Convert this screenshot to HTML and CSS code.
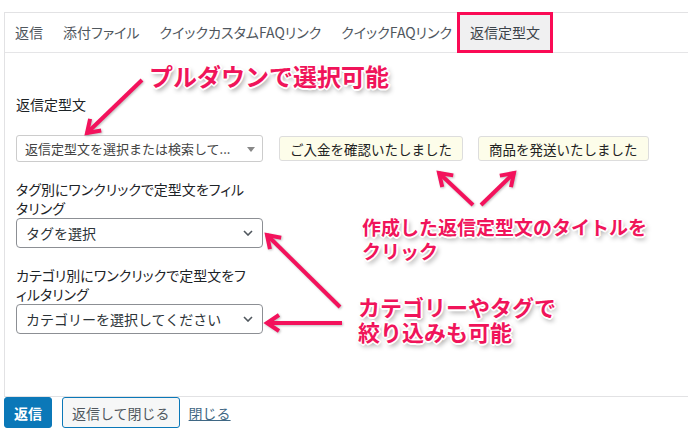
FILE: index.html
```html
<!DOCTYPE html>
<html lang="ja">
<head>
    <meta charset="UTF-8">
    <meta name="viewport" content="width=device-width, initial-scale=1.0">
    <title>返信定型文</title>
    <link rel="stylesheet" href="styles.css">
</head>
<body>
    <div class="page">
        <div class="panel">
            <ul class="tabs">
                <li>返信</li>
                <li>添付ファイル</li>
                <li>クイックカスタムFAQリンク</li>
                <li>クイックFAQリンク</li>
                <li class="active">返信定型文</li>
            </ul>
            <div class="content">
                <p class="label">返信定型文</p>
                <div class="row">
                    <div class="combo">返信定型文を選択または検索して...<span class="tri"></span></div>
                    <button class="snippet">ご入金を確認いたしました</button>
                    <button class="snippet">商品を発送いたしました</button>
                </div>
                <p class="label two">タグ別にワンクリックで定型文をフィル<br>タリング</p>
                <div class="select">タグを選択
                    <svg width="10" height="6" viewBox="0 0 10 6"><path d="M1 1l4 4 4-4" fill="none" stroke="#50575e" stroke-width="1.6"/></svg>
                </div>
                <p class="label two">カテゴリ別にワンクリックで定型文をフ<br>ィルタリング</p>
                <div class="select">カテゴリーを選択してください
                    <svg width="10" height="6" viewBox="0 0 10 6"><path d="M1 1l4 4 4-4" fill="none" stroke="#50575e" stroke-width="1.6"/></svg>
                </div>
            </div>
        </div>
        <div class="actions">
            <button class="btn primary">返信</button>
            <button class="btn secondary">返信して閉じる</button>
            <a href="#" class="close">閉じる</a>
        </div>

        <!-- annotations -->
        <div class="note note-pulldown">プルダウンで選択可能</div>
        <div class="note note-title">作成した返信定型文のタイトルを<br>クリック</div>
        <div class="note note-filter">カテゴリーやタグで<br>絞り込みも可能</div>
        <svg class="arrows" width="688" height="435" viewBox="0 0 688 435">
            <defs>
                <marker id="head" markerUnits="userSpaceOnUse" viewBox="-16 -11 20 22" markerWidth="20" markerHeight="22" refX="0" refY="0" orient="auto">
                    <path d="M-12 -8L0 0L-12 8" fill="none" stroke="#f3125c" stroke-width="4" stroke-linejoin="miter"/>
                </marker>
            </defs>
            <g stroke="#f3125c" stroke-width="4" marker-end="url(#head)">
                <line x1="142" y1="80" x2="87" y2="133"/>
                <line x1="473" y1="205" x2="439" y2="173"/>
                <line x1="481" y1="205" x2="514" y2="173"/>
                <line x1="340" y1="307" x2="267" y2="235"/>
                <line x1="342" y1="323" x2="267" y2="323"/>
            </g>
        </svg>
    </div>
</body>
</html>
```

FILE: styles.css
```css
body {
    margin: 0;
    font-family: "Noto Sans CJK JP", "Noto Sans", sans-serif;
    font-size: 14px;
    color: #1d2327;
    background-color: #fff;
}
.page {
    position: relative;
    width: 688px;
    height: 435px;
    overflow: hidden;
}
.panel {
    margin: 12px 0 0 4px;
    height: 385px;
    box-sizing: border-box;
    border: 1px solid #e2e2e4;
    border-right: none;
}
.tabs {
    display: flex;
    list-style: none;
    margin: 0;
    padding: 0;
    height: 39px;
    border-bottom: 1px solid #e5e5e7;
}
.tabs li {
    padding: 0 10px;
    line-height: 39px;
    color: #50575e;
    font-feature-settings: "palt";
}
.tabs li.active {
    margin: -1px 0 -1px -5px;
    padding: 0 10px;
    line-height: 35px;
    background-color: #f0f0f1;
    border: 3px solid #fa0a55;
    color: #3c434a;
}
.content {
    padding: 41px 11px 0;
}
.label {
    margin: 0 0 21px;
    line-height: 20px;
    font-feature-settings: "palt";
}
.label.two {
    margin: 18px 0 0;
    line-height: 19px;
}
.row {
    display: flex;
    align-items: center;
    gap: 15px;
    height: 27px;
}
.combo {
    width: 247px;
    height: 27px;
    box-sizing: border-box;
    border: 1px solid #ccc;
    border-radius: 3px;
    padding: 0 8px;
    display: flex;
    align-items: center;
    font-size: 13px;
    color: #444;
    position: relative;
    margin-right: 1px;
}
.tri {
    position: absolute;
    right: 7px;
    top: 11px;
    border-left: 4px solid transparent;
    border-right: 4px solid transparent;
    border-top: 5px solid #888;
}
.snippet {
    height: 25px;
    padding: 0 10px;
    font-family: inherit;
    font-size: 13.5px;
    color: #222;
    background-color: #fdfdea;
    border: 1px solid #ddd;
    border-radius: 3px;
}
.select {
    width: 247px;
    height: 30px;
    box-sizing: border-box;
    border: 1px solid #8c8f94;
    border-radius: 4px;
    padding: 0 9px 0 9px;
    display: flex;
    align-items: center;
    justify-content: space-between;
    color: #2c3338;
}
.actions {
    display: flex;
    align-items: center;
    margin-left: 4px;
    gap: 10px;
}
.btn {
    height: 31px;
    font-family: inherit;
    font-size: 14px;
    border-radius: 3px;
    padding: 0 9px;
}
.primary {
    background-color: #0b78b8;
    border: 1px solid #0b78b8;
    color: #fff;
    font-weight: bold;
}
.secondary {
    background-color: #f6f7f7;
    border: 1px solid #0b78b8;
    color: #50575e;
}
.close {
    margin-left: -1px;
    color: #3f6784;
    text-decoration: underline;
}

/* annotations */
.note {
    position: absolute;
    color: #f0145a;
    font-weight: bold;
    white-space: nowrap;
    text-shadow: 1px 1px 0 #fff, -1px -1px 0 #fff, 1px -1px 0 #fff, -1px 1px 0 #fff,
        0 2px 0 #fff, 2px 0 0 #fff, 0 -2px 0 #fff, -2px 0 0 #fff,
        2px 3px 5px rgba(0, 0, 0, 0.45);
}
.note-pulldown {
    left: 149px;
    top: 61px;
    font-size: 24px;
    line-height: 30px;
}
.note-title {
    left: 362px;
    top: 215px;
    font-size: 19px;
    line-height: 24px;
}
.note-filter {
    left: 358px;
    top: 294px;
    font-size: 22px;
    line-height: 25px;
}
.arrows {
    position: absolute;
    top: 0;
    left: 0;
    pointer-events: none;
    filter: drop-shadow(1px 1px 1px rgba(0, 0, 0, 0.25));
}
```
